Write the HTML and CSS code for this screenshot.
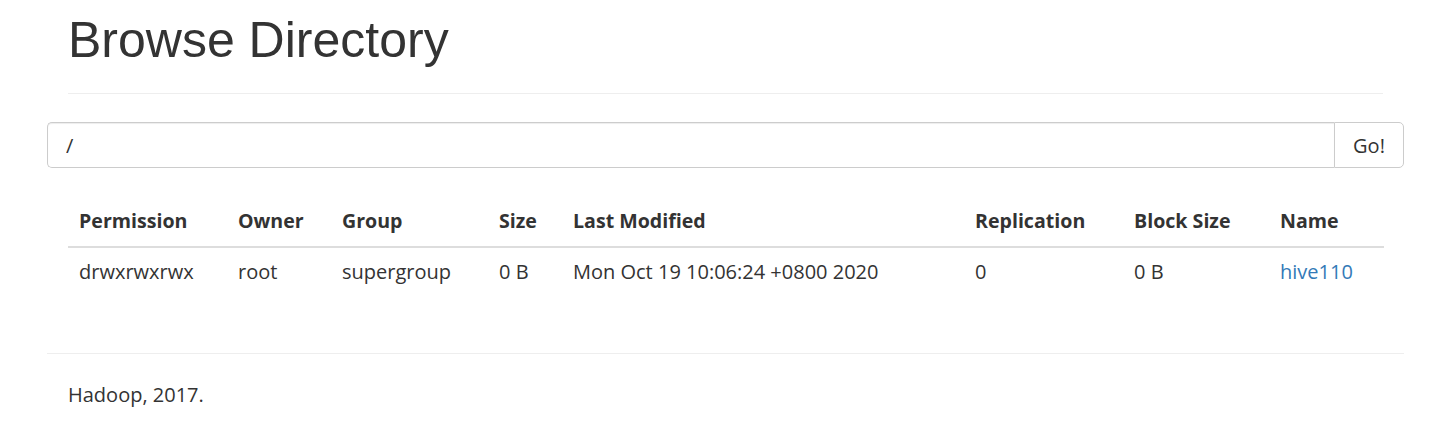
FILE: index.html
```html
<!DOCTYPE html>
<html>
<head>
<meta charset="utf-8">
<link rel="stylesheet" href="styles.css">
</head>
<body>
<div class="container">
  <div class="page-header">
    <h1>Browse Directory</h1>
  </div>
  <div class="input-group">
    <input class="form-control" type="text" value="/">
    <button class="btn">Go!</button>
  </div>
  <div class="table-wrap">
    <table class="table">
      <colgroup>
        <col class="c1"><col class="c2"><col class="c3"><col class="c4"><col class="c5"><col class="c6"><col class="c7"><col class="c8">
      </colgroup>
      <thead>
        <tr>
          <th>Permission</th><th>Owner</th><th>Group</th><th>Size</th><th>Last Modified</th><th>Replication</th><th>Block Size</th><th>Name</th>
        </tr>
      </thead>
      <tbody>
        <tr>
          <td>drwxrwxrwx</td><td>root</td><td>supergroup</td><td>0 B</td><td>Mon Oct 19 10:06:24 +0800 2020</td><td>0</td><td>0 B</td><td><a href="#">hive110</a></td>
        </tr>
      </tbody>
    </table>
  </div>
  <hr class="footer-rule">
  <div class="footer">Hadoop, 2017.</div>
</div>
</body>
</html>
```

FILE: styles.css
```css
html, body {
  margin: 0;
  padding: 0;
  background: #fff;
}
body {
  font-family: "Open Sans", "Noto Sans", sans-serif;
  font-size: 20px;
  color: #333;
}
.container {
  width: 1357px;
  margin-left: 47px;
}
.page-header {
  margin: 0 21px;
  height: 94px;
  border-bottom: 1px solid #eee;
  box-sizing: border-box;
}
.page-header h1 {
  margin: 0;
  padding-top: 12px;
  font-family: "Liberation Sans", Arial, sans-serif;
  font-weight: 400;
  font-size: 50px;
  line-height: 56px;
  color: #333;
}
.input-group {
  display: flex;
  margin-top: 28px;
  height: 46px;
}
.form-control {
  flex: 1;
  height: 46px;
  box-sizing: border-box;
  border: 1px solid #ccc;
  border-right: 0;
  border-radius: 5px 0 0 5px;
  box-shadow: inset 0 1px 1px rgba(0,0,0,0.075);
  padding: 0 18px;
  font-family: "Open Sans", "Noto Sans", sans-serif;
  font-size: 20px;
  color: #333;
  outline: none;
}
.btn {
  width: 70px;
  height: 46px;
  box-sizing: border-box;
  border: 1px solid #ccc;
  border-radius: 0 5px 5px 0;
  background: #fff;
  font-family: "Open Sans", "Noto Sans", sans-serif;
  font-size: 20px;
  color: #333;
  padding: 0;
}
.table-wrap {
  margin: 0 20px 0 21px;
  padding-top: 28px;
}
.table {
  width: 1316px;
  border-collapse: collapse;
  table-layout: fixed;
}
.c1 { width: 159px; }
.c2 { width: 104px; }
.c3 { width: 157px; }
.c4 { width: 74px; }
.c5 { width: 402px; }
.c6 { width: 159px; }
.c7 { width: 146px; }
.c8 { width: 115px; }
.table th {
  text-align: left;
  font-weight: 700;
  font-size: 19.6px;
  padding: 11px 11px;
  line-height: 28px;
  border-bottom: 2px solid #ddd;
  white-space: nowrap;
}
.table td {
  padding: 10px 11px;
  line-height: 28px;
  white-space: nowrap;
}
.table a {
  color: #337ab7;
  text-decoration: none;
}
.footer-rule {
  margin: 57px 0 0;
  border: 0;
  border-top: 1px solid #eee;
  height: 0;
}
.footer {
  padding: 27px 21px 0;
  line-height: 28px;
}
```
